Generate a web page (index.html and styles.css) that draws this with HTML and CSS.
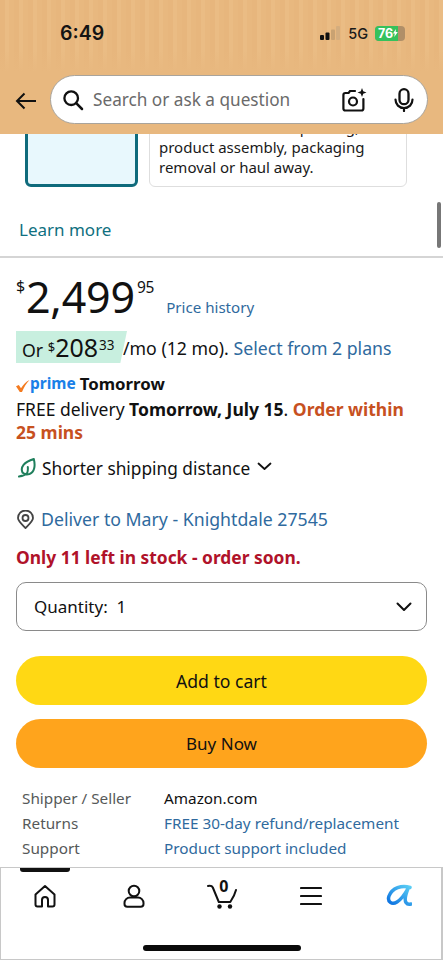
FILE: index.html
```html
<!DOCTYPE html>
<html lang="en">
<head>
<meta charset="utf-8">
<title>Amazon product</title>
<link rel="stylesheet" href="styles.css">
</head>
<body>
<div class="phone">
  <header class="header">
    <div class="status">
      <span class="time">6:49</span>
      <div class="status-right">
        <svg class="signal" width="22" height="14" viewBox="0 0 20 14"><rect x="0" y="9" width="4" height="5" rx="1" fill="#111"/><rect x="5.5" y="6.5" width="4" height="7.5" rx="1" fill="#111"/><rect x="11" y="3.5" width="4" height="10.5" rx="1" fill="#c9a272"/><rect x="16" y="0" width="4" height="14" rx="1" fill="#d4ad7e"/></svg>
        <span class="net">5G</span>
        <span class="battery"><span class="battery-fill">76<svg width="6" height="10" viewBox="0 0 6 10"><path d="M3.6 0 0 5.6h2.2L1.6 10 6 3.8H3.4z" fill="#fff"/></svg></span></span>
      </div>
    </div>
    <div class="searchrow">
      <svg class="back" width="22" height="18" viewBox="0 0 22 18"><path d="M21 9H2M9.500 1.500 2 9l7.500 7.500" fill="none" stroke="#111" stroke-width="2"/></svg>
      <div class="search">
        <svg width="22" height="22" viewBox="0 0 22 22"><circle cx="9.2" cy="9.2" r="6.8" fill="none" stroke="#111" stroke-width="2.3"/><path d="m14.2 14.2 5.8 5.8" stroke="#111" stroke-width="2.5" stroke-linecap="round"/></svg>
        <span class="placeholder">Search or ask a question</span>
        <svg class="cam" width="25" height="24" viewBox="0 0 25 24"><path d="M13 3H8L6.6 5H3.4A2 2 0 0 0 1.4 7v13.5a2 2 0 0 0 2 2h16a2 2 0 0 0 2-2V11" fill="none" stroke="#111" stroke-width="2.2" stroke-linecap="round"/><circle cx="11" cy="13.5" r="4" fill="none" stroke="#111" stroke-width="2.2"/><path d="m20 0 1.200 3.300L24.500 4.500 21.200 5.700 20 9l-1.200-3.300L15.500 4.500l3.300-1.200z" fill="#111"/></svg>
        <svg class="mic" width="20" height="24" viewBox="0 0 20 24"><rect x="5.500" y="1.200" width="9" height="15" rx="4.500" fill="none" stroke="#111" stroke-width="2.300"/><path d="M1.500 11.500c0 5 3.600 8.500 8.500 8.500s8.500-3.500 8.500-8.500M10 20v3" fill="none" stroke="#111" stroke-width="2.200" stroke-linecap="round"/></svg>
      </div>
    </div>
  </header>

  <main class="content">
    <section class="services">
      <div class="thumb"></div>
      <div class="note">Does not include unpacking,<br>product assembly, packaging<br>removal or haul away.</div>
    </section>
    <a class="learn">Learn more</a>
    <span class="scrollbar"></span>

    <section class="buy">
      <div class="price-row">
        <span class="price"><sup class="dollar">$</sup>2,499<sup class="cents">95</sup></span>
        <a class="history">Price history</a>
      </div>
      <div class="plan">
        <span class="plan-tag">Or <sup class="s-dollar">$</sup><span class="s-price">208</span><sup class="s-cents">33</sup></span>
        <span class="plan-text">/mo (12 mo). <a class="link">Select from 2 plans</a></span>
      </div>
      <div class="prime">
        <svg width="14" height="12" viewBox="0 0 14 12"><path d="M0 6.200 2.800 5 5 8.200C7.200 4.500 9.800 2 13.500 0 10.500 3 8 7 6 12H3.800z" fill="#f47b20"/></svg>
        <span class="prime-word">prime</span>
        <span class="prime-day">Tomorrow</span>
      </div>
      <p class="delivery">FREE delivery <b>Tomorrow, July 15</b>. <b class="urgent">Order within<br>25 mins</b></p>
      <div class="shorter">
        <svg width="20" height="20" viewBox="0 0 20 20"><path d="M4.500 14.500C2 9 6 4 15.800 1c1.800 7 .5 13.500-4.300 15-2.800.8-5.500 0-7-1.500zM1 18.500c3-.5 6-1 8.200-3.500.8-2 .8-4 .6-6" fill="none" stroke="#1f7f5c" stroke-width="2" stroke-linecap="round" stroke-linejoin="round"/></svg>
        <span>Shorter shipping distance</span>
        <svg class="chev" width="15" height="9" viewBox="0 0 15 9"><path d="m1.500 1.500 6 5.500 6-5.500" fill="none" stroke="#111" stroke-width="1.800" stroke-linecap="round" stroke-linejoin="round"/></svg>
      </div>
      <div class="deliver">
        <svg width="17" height="19" viewBox="0 0 17 19"><path d="M8.500 18C4 13.500 1 11 1 8a7.500 7.500 0 0 1 15 0c0 3-3 5.500-7.500 10z" fill="none" stroke="#444" stroke-width="1.800" stroke-linejoin="round"/><circle cx="8.500" cy="8" r="3" fill="none" stroke="#444" stroke-width="1.800"/></svg>
        <a class="link">Deliver to Mary - Knightdale 27545</a>
      </div>
      <p class="stock">Only 11 left in stock - order soon.</p>
      <div class="qty">
        <span>Quantity: &nbsp;1</span>
        <svg width="16" height="10" viewBox="0 0 16 10"><path d="m1.500 1.500 6.500 6.500 6.500-6.500" fill="none" stroke="#111" stroke-width="2" stroke-linecap="round" stroke-linejoin="round"/></svg>
      </div>
      <div class="btn btn-cart">Add to cart</div>
      <div class="btn btn-buy">Buy Now</div>
      <dl class="facts">
        <dt>Shipper / Seller</dt><dd>Amazon.com</dd>
        <dt>Returns</dt><dd class="link">FREE 30-day refund/replacement</dd>
        <dt>Support</dt><dd class="link">Product support included</dd>
      </dl>
    </section>
  </main>

  <nav class="nav">
    <span class="indicator"></span>
    <div class="tabs">
      <svg width="24" height="24" viewBox="0 0 24 24"><path d="M9 22.500H4.500a2 2 0 0 1-2-2V10.500L12 2l9.500 8.500v10a2 2 0 0 1-2 2H15V16a3 3 0 0 0-6 0z" fill="none" stroke="#111" stroke-width="2" stroke-linejoin="round"/></svg>
      <svg width="22" height="24" viewBox="0 0 22 24"><circle cx="11" cy="7" r="5.300" fill="none" stroke="#111" stroke-width="2"/><path d="M7 13.500h8a5.500 5.500 0 0 1 5.500 5.500v1a2.800 2.800 0 0 1-2.800 2.800H4.300A2.800 2.800 0 0 1 1.500 20v-1A5.500 5.500 0 0 1 7 13.500z" fill="none" stroke="#111" stroke-width="2"/></svg>
      <div class="cart">
        <svg width="30" height="26" viewBox="0 0 30 26"><path d="M1 3c2.500-.5 4-.2 4.800 1.500l6 14.500h11.500C26 15 28 11 29 7" fill="none" stroke="#111" stroke-width="2" stroke-linecap="round" stroke-linejoin="round"/><circle cx="12.500" cy="23.500" r="2.200" fill="#111"/><circle cx="23" cy="23.500" r="2.200" fill="#111"/></svg>
        <span class="count">0</span>
      </div>
      <svg width="22" height="20" viewBox="0 0 22 20"><path d="M1 2h20M1 10h20M1 18h20" stroke="#111" stroke-width="2.200" stroke-linecap="round"/></svg>
      <svg width="26" height="24" viewBox="0 0 26 24"><defs><linearGradient id="rufus" x1="0" y1="1" x2="1" y2="0"><stop offset="0" stop-color="#0a6fe0"/><stop offset="1" stop-color="#5cd0f5"/></linearGradient></defs><path d="M24 3.500C16 .5 6 4 3 12c-2 6 3 9 8 6 4-2.500 8-8 11-13.500-2 5-4 11-2 14 1 1.500 3 2 5 1.500" fill="none" stroke="url(#rufus)" stroke-width="3.500" stroke-linecap="round"/></svg>
    </div>
    <span class="home-bar"></span>
  </nav>
</div>
</body>
</html>
```

FILE: styles.css
```css
* { box-sizing: border-box; }
html, body { margin: 0; padding: 0; }
body { width: 443px; height: 960px; overflow: hidden; background: #fff; font-family: "Noto Sans", "Liberation Sans", sans-serif; color: #111; }
.phone { width: 443px; height: 960px; display: flex; flex-direction: column; overflow: hidden; }

.header { height: 134px; flex: none; position: relative; z-index: 2; padding-top: 20px;
  background: linear-gradient(#e8b87f00 50px, #e8b87f 72px), repeating-linear-gradient(90deg, #e7b67d 0 5px, #eabc84 5px 9px, #e8b87f 9px 14px); background-color: #e8b87f; }
.status { display: flex; justify-content: space-between; align-items: center; height: 26px; padding: 0 38px 0 60px; }
.time { font: 600 19.500px "Inter", sans-serif; color: #141414; }
.status-right { display: flex; align-items: center; gap: 7px; }
.net { font: 500 14.500px "Inter", sans-serif; color: #1a1a1a; }
.battery { width: 30px; height: 15px; border-radius: 4px; background: #b08f68; overflow: hidden; display: block; }
.battery-fill { width: 23px; height: 15px; background: #35c15c; color: #fff; font: 700 12.500px/15px "Inter", sans-serif; display: flex; align-items: center; padding-left: 3px; }

.searchrow { display: flex; align-items: center; padding: 0 15px 0 15px; margin-top: 29px; gap: 13px; }
.back { flex: none; margin-top: 2px; }
.search { flex: 1; height: 49px; background: #fff; border: 1px solid #a9a49c; border-radius: 25px; display: flex; align-items: center; padding: 0 13px 0 11px; }
.placeholder { margin-left: 9px; flex: 1; font-size: 17.200px; color: #6a6a6a; }
.cam { margin-right: 27px; }

.content { flex: 1; min-height: 0; position: relative; overflow: hidden; }
.services { display: flex; gap: 11px; padding: 0 36px 0 25px; margin-top: -31px; height: 84px; }
.thumb { width: 113px; background: #e8f8fd; border: 3px solid #0f6b7c; border-radius: 6px; }
.note { flex: 1; background: #fff; border: 1px solid #dedede; border-radius: 6px; padding: 13px 9px 0; font-size: 15px; line-height: 20px; color: #1a1a1a; white-space: nowrap; }
.learn { display: block; margin: 31px 0 0 19px; font-size: 17px; line-height: 24px; color: #0f7080; }
.scrollbar { position: absolute; right: 2px; top: 68px; width: 4px; height: 46px; border-radius: 2px; background: #777; }

.buy { margin-top: 14px; border-top: 2px solid #d5d5d5; padding: 0 16px; }
.price-row { display: flex; align-items: flex-start; height: 60px; padding-top: 13px; }
.price { font-size: 43px; line-height: 52px; letter-spacing: -.2px; color: #111; }
sup { vertical-align: baseline; position: relative; }
.dollar { font-size: 16px; top: -21px; margin-right: 1px; }
.cents { font-size: 15.500px; top: -20px; margin-left: 2px; }
.history { font-size: 15.100px; color: #2f6a9e; margin: 26px 0 0 12px; }
.plan { display: flex; align-items: center; height: 32px; margin-top: 13px; font-size: 17.700px; }
.plan-tag { background: #c8efdf; height: 32px; width: 111px; padding-left: 6px; line-height: 32px; clip-path: polygon(0 0, 100% 0, 94% 100%, 0 100%); white-space: nowrap; }
.s-dollar { font-size: 13px; top: -5px; }
.s-price { font-size: 25px; }
.s-cents { font-size: 13.500px; top: -7px; margin-left: 1px; }
.plan-text { margin-left: -4px; margin-top: 2px; white-space: nowrap; }
.link { color: #2f6a9e; }
.prime { display: flex; align-items: center; height: 24px; margin-top: 8px; }
.prime svg { margin-top: 5px; }
.prime-word { color: #1a80e8; font-weight: 700; font-size: 15.500px; }
.prime-day { font-weight: 700; font-size: 16.800px; margin-left: 4px; }
.delivery { margin: 3px 0 0; font-size: 17.500px; line-height: 23px; white-space: nowrap; }
.delivery b { font-weight: 700; }
.urgent { color: #c7511f; }
.shorter { display: flex; align-items: center; height: 24px; margin-top: 12px; font-size: 17.300px; padding-left: 2px; gap: 4px; }
.chev { margin: 0 0 4px 3px; }
.deliver { display: flex; align-items: center; gap: 7px; margin-top: 27px; height: 24px; font-size: 17.700px; padding-left: 1px; }
.stock { margin: 14px 0 0; font-size: 17.400px; line-height: 24px; font-weight: 700; color: #b0122a; }
.qty { display: flex; justify-content: space-between; align-items: center; margin-top: 13px; height: 49px; border: 1px solid #8a8a8a; border-radius: 10px; padding: 0 14px 0 17px; font-size: 17px; }
.btn { display: flex; justify-content: center; align-items: center; height: 49px; border-radius: 25px; }
.btn-cart { margin-top: 25px; background: #ffd814; font-size: 17.600px; }
.btn-buy { margin-top: 14px; background: #ffa41c; font-size: 17px; }
.facts { display: grid; grid-template-columns: 142px 1fr; grid-auto-rows: 25px; margin: 17px 0 0 6px; align-items: center; font-size: 15.300px; white-space: nowrap; }
.facts dt { color: #565959; }
.facts dd { margin: 0; }

.nav { height: 93px; flex: none; position: relative; background: #fff; border: 1px solid #c8c8c8; border-right-width: 2px; }
.indicator { position: absolute; left: 19px; top: 0; width: 50px; height: 4px; background: #111; border-radius: 0 0 3px 3px; }
.tabs { display: grid; grid-template-columns: repeat(5, 88.500px); justify-items: center; align-items: center; padding-top: 14px; height: 42px; }
.cart { position: relative; width: 30px; height: 26px; }
.count { position: absolute; left: 12px; top: -8px; font-size: 16px; font-weight: 700; color: #111; }
.home-bar { position: absolute; left: 142px; bottom: 8px; width: 158px; height: 6px; border-radius: 3px; background: #0a0a0a; }
```
